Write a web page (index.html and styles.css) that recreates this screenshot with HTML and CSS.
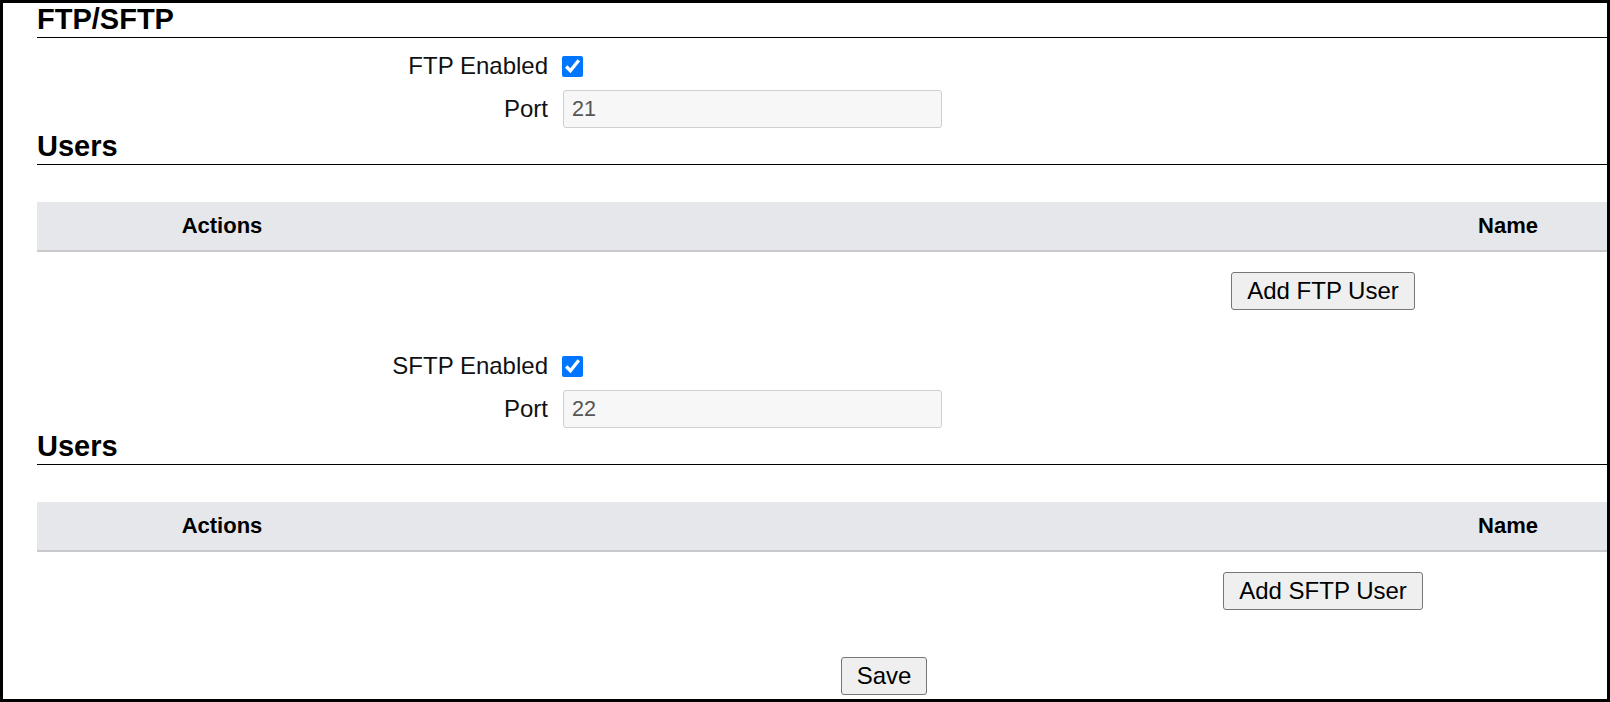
FILE: index.html
```html
<!DOCTYPE html>
<html lang="en">
<head>
<meta charset="utf-8">
<title>FTP/SFTP</title>
<link rel="stylesheet" href="styles.css">
</head>
<body>
<div class="frame">
  <div class="page">
    <h3 class="section-title">FTP/SFTP</h3>

    <div class="block">
      <div class="field">
        <label class="field-label" for="ftp-enabled">FTP Enabled</label>
        <input class="check" type="checkbox" id="ftp-enabled" checked>
      </div>
      <div class="field">
        <label class="field-label" for="ftp-port">Port</label>
        <input class="text-input" type="text" id="ftp-port" value="21" readonly>
      </div>
      <h3 class="section-title sub-title">Users</h3>
      <table class="users">
        <thead>
          <tr><th class="col-actions">Actions</th><th class="col-name">Name</th></tr>
        </thead>
        <tfoot>
          <tr><td colspan="2" class="add-cell"><button class="btn" type="button">Add FTP User</button></td></tr>
        </tfoot>
      </table>
    </div>

    <div class="block">
      <div class="field">
        <label class="field-label" for="sftp-enabled">SFTP Enabled</label>
        <input class="check" type="checkbox" id="sftp-enabled" checked>
      </div>
      <div class="field">
        <label class="field-label" for="sftp-port">Port</label>
        <input class="text-input" type="text" id="sftp-port" value="22" readonly>
      </div>
      <h3 class="section-title sub-title">Users</h3>
      <table class="users">
        <thead>
          <tr><th class="col-actions">Actions</th><th class="col-name">Name</th></tr>
        </thead>
        <tfoot>
          <tr><td colspan="2" class="add-cell"><button class="btn" type="button">Add SFTP User</button></td></tr>
        </tfoot>
      </table>
    </div>

    <div class="save-row">
      <button class="btn" type="button">Save</button>
    </div>
  </div>
</div>
</body>
</html>
```

FILE: styles.css
```css
html, body {
  margin: 0;
  padding: 0;
  overflow: hidden;
  background: #fff;
}

body {
  font-family: "Liberation Sans", Arial, sans-serif;
  color: #000;
}

.frame {
  box-sizing: border-box;
  width: 1610px;
  height: 702px;
  border: 3px solid #000;
  overflow: hidden;
}

.page {
  width: 2572px;
  padding-left: 34px;
}

.section-title {
  margin: 0;
  font-size: 29px;
  font-weight: bold;
  line-height: 32px;
  padding-bottom: 2px;
  border-bottom: 1px solid #000;
}

.sub-title {
  margin-top: 2px;
}

.block {
  padding-top: 9px;
}

.block + .block {
  margin-top: 28px;
}

.field {
  display: flex;
  align-items: center;
  gap: 14px;
  height: 38px;
  margin-bottom: 5px;
}

.field + .field {
  margin-bottom: 0;
}

.field-label {
  width: 511px;
  text-align: right;
  font-size: 24px;
  color: #111;
}

.check {
  width: 21px;
  height: 21px;
  margin: 0;
  accent-color: #0075ff;
}

.text-input {
  box-sizing: border-box;
  width: 379px;
  height: 38px;
  margin: 0 0 0 1px;
  padding: 0 8px;
  border: 1px solid #cfcfcf;
  border-radius: 3px;
  background: #f7f7f7;
  font-family: "Liberation Sans", Arial, sans-serif;
  font-size: 21.6px;
  color: #555;
  outline: none;
}

.users {
  width: 2572px;
  margin-top: 37px;
  border-collapse: collapse;
}

.users th {
  background: #e6e7ea;
  border-bottom: 2px solid #c9c9cb;
  font-size: 22px;
  font-weight: bold;
  line-height: 25px;
  padding: 11px 0 12px;
  text-align: center;
}

.col-actions {
  width: 370px;
}

.add-cell {
  padding: 20px 0 0;
  text-align: center;
}

.btn {
  box-sizing: border-box;
  height: 38px;
  padding: 0 15px;
  border: 1px solid #767676;
  border-radius: 3px;
  background: #efefef;
  font-family: "Liberation Sans", Arial, sans-serif;
  font-size: 24px;
  color: #000;
}

.save-row {
  width: 1694px;
  margin-top: 47px;
  text-align: center;
}
```
